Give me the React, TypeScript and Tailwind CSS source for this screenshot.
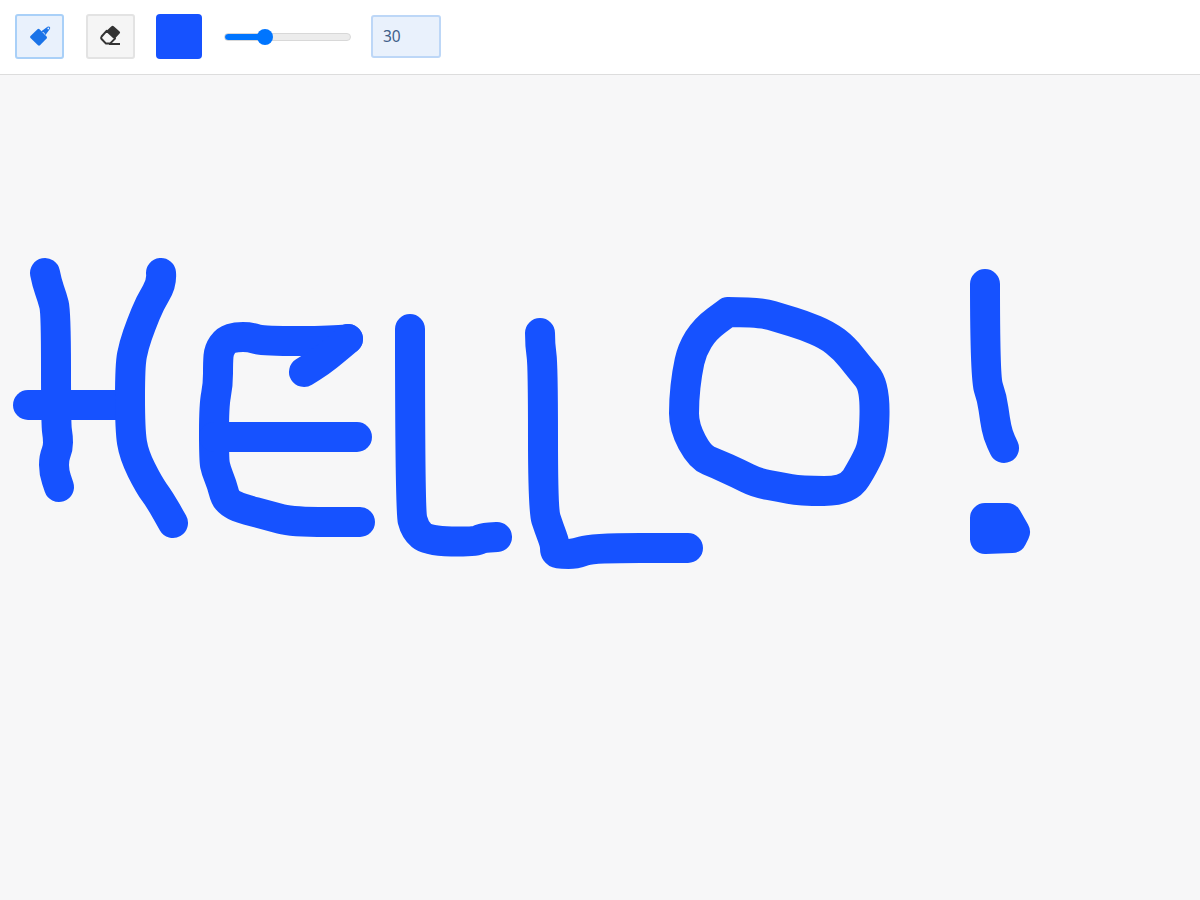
type P = [number, number];

const lines: P[][] = [
  [[45, 273], [47, 283], [52, 297], [56, 312], [56, 425], [58, 437], [58, 448], [54, 458], [54, 472], [59, 487]],
  [[28, 405], [130, 405]],
  [[161, 273], [162, 283], [150, 303], [141, 325], [134, 345], [130, 365], [130, 430], [134, 455], [149, 485], [160, 500], [173, 523]],
  [[348, 339], [335, 341], [262, 341], [250, 337], [236, 337], [226, 340], [219, 350], [218, 362], [218, 385], [214, 405], [214, 460], [216, 470], [222, 485], [225, 497], [230, 503], [240, 508], [270, 516], [292, 522], [360, 522]],
  [[214, 437], [357, 437]],
  [[348, 339], [335, 350], [320, 362], [304, 372]],
  [[410, 329], [410, 510], [415, 530], [428, 541], [475, 542], [482, 538], [497, 537]],
  [[540, 333], [540, 345], [543, 365], [543, 510], [549, 528], [555, 544], [555, 553], [562, 554], [575, 554], [592, 548], [688, 548]],
  [[728, 312], [760, 312], [783, 319], [803, 325], [827, 335], [844, 348], [859, 367], [875, 386], [874, 443], [864, 465], [848, 491], [800, 491], [780, 487], [757, 483], [737, 473], [717, 464], [700, 457], [684, 427], [684, 400], [687, 373], [692, 350], [705, 329], [728, 312]],
  [[985, 284], [985, 378], [992, 398], [995, 420], [998, 435], [1004, 448]],
];

function smooth(p: P[]) {
  let d = `M${p[0][0]} ${p[0][1]}`;
  for (let i = 1; i < p.length - 1; i++) {
    const mx = (p[i][0] + p[i + 1][0]) / 2;
    const my = (p[i][1] + p[i + 1][1]) / 2;
    d += `Q${p[i][0]} ${p[i][1]} ${mx} ${my}`;
  }
  const l = p[p.length - 1];
  return d + `L${l[0]} ${l[1]}`;
}

function BrushIcon() {
  return (
    <svg width="24" height="24" viewBox="0 0 24 24" className="block">
      <path d="M2.5 11 L9.5 4.2 Q10.5 3.4 11.5 4.2 L18.6 11.5 Q19.4 12.5 18.6 13.5 L12 20.3 Q11 21.2 10 20.3 L2.5 13 Q1.5 12 2.5 11Z" fill="#1a73e8" />
      <path d="M13 6.5 L16 7.5 L17.5 10 L22 3.8 Q22.6 2.8 21.5 1.8 Q20.5 1 19.5 1.8Z" fill="#1a73e8" />
      <circle cx="20.3" cy="3.4" r="0.9" fill="#e9f1fc" />
    </svg>
  );
}

function EraserIcon() {
  return (
    <svg width="24" height="24" viewBox="0 0 24 24" className="block">
      <path d="M12.5 1.3 Q13.6 0.4 14.7 1.3 L20.6 6.6 Q21.6 7.6 20.6 8.6 L16 13.6 L7.6 5.8Z" fill="#333333" />
      <path d="M7.6 5.8 L16 13.6 L11 18.6 L7 18.6 L2.6 14 Q1.6 12.8 2.6 11.5Z" fill="none" stroke="#333333" strokeWidth="2" strokeLinejoin="round" />
      <path d="M10 19 L21 19" fill="none" stroke="#333333" strokeWidth="2" />
    </svg>
  );
}

export default function App() {
  return (
    <div className="flex h-[900px] w-[1200px] flex-col overflow-hidden bg-[#f7f7f8] font-['Noto_Sans',sans-serif]">
      <div className="flex h-[75px] shrink-0 items-center border-b border-[#dddddd] bg-white pb-[1px] pl-[15px]">
        <button className="flex h-[45px] w-[49px] items-center justify-center rounded-[3px] border-2 border-[#a9d0f8] bg-[#e9f1fc]">
          <BrushIcon />
        </button>
        <button className="ml-[22px] flex h-[45px] w-[49px] items-center justify-center rounded-[3px] border-2 border-[#e3e3e3] bg-[#f5f5f5]">
          <EraserIcon />
        </button>
        <div className="ml-[21px] h-[45px] w-[46px] rounded-[4px] bg-[#1652ff]" />
        <input
          type="range"
          min={1}
          max={100}
          defaultValue={30}
          className="ml-[22px] h-[16px] w-[127px] appearance-none bg-transparent [&::-webkit-slider-runnable-track]:h-[8px] [&::-webkit-slider-runnable-track]:rounded-full [&::-webkit-slider-runnable-track]:border [&::-webkit-slider-runnable-track]:border-[#d8d8d8] [&::-webkit-slider-runnable-track]:bg-[linear-gradient(to_right,#0075ff_40px,#ececec_40px)] [&::-webkit-slider-thumb]:-mt-[5px] [&::-webkit-slider-thumb]:h-[16px] [&::-webkit-slider-thumb]:w-[16px] [&::-webkit-slider-thumb]:appearance-none [&::-webkit-slider-thumb]:rounded-full [&::-webkit-slider-thumb]:bg-[#0075ff]"
        />
        <input
          type="text"
          readOnly
          value="30"
          className="ml-[20px] h-[43px] w-[70px] rounded-[3px] border-2 border-[#bdd7f7] bg-[#e9f1fc] pb-[2px] pl-[10px] text-[15.5px] text-[#3f5f8a] outline-none"
        />
      </div>
      <div className="min-h-0 flex-1">
        <svg viewBox="0 75 1200 825" className="block h-full w-full" fill="none" stroke="#1652ff" strokeWidth={30} strokeLinecap="round" strokeLinejoin="round">
          {lines.map((p, i) => (
            <path key={i} d={smooth(p)} />
          ))}
          <path d="M985 518L1007 518L1015 532L1012 538L985 539Z" fill="#1652ff" />
        </svg>
      </div>
    </div>
  );
}
